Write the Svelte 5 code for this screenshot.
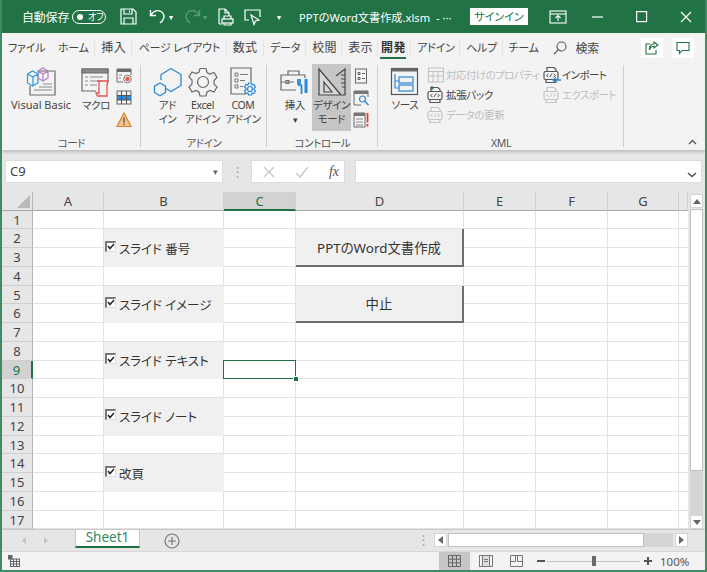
<script lang="ts">
  const TABS = ['ファイル', 'ホーム', '挿入', 'ページ レイアウト', '数式', 'データ', '校閲', '表示', '開発', 'アドイン', 'ヘルプ', 'チーム'];
  const KANJI_TABS = ['挿入', '数式', '校閲', '表示'];
  const COLUMNS = ['A', 'B', 'C', 'D', 'E', 'F', 'G', ''];
  const ROWS = Array.from({ length: 17 }, (_, i) => i + 1);

  // sheet controls sit on the grid: col is 1-based from A, row is the sheet row
  const CHECKS = [
    { row: 2, label: 'スライド 番号' },
    { row: 5, label: 'スライド イメージ' },
    { row: 8, label: 'スライド テキスト' },
    { row: 11, label: 'スライド ノート' },
    { row: 14, label: '改頁' },
  ];
  const BUTTONS = [
    { row: 2, label: 'PPTのWord文書作成' },
    { row: 5, label: '中止' },
  ];

  function covered(row: number, col: number) {
    if (col === 2) return CHECKS.some((c) => row === c.row || row === c.row + 1);
    if (col === 4) return BUTTONS.some((b) => row === b.row || row === b.row + 1);
    if (col === 3) return row === 9;
    return false;
  }
</script>

{#snippet xmlIcon(color: string, extra: string)}
  <svg width="18" height="18" viewBox="0 0 18 18" fill="none" stroke={color} stroke-width="1.2">
    <path d="M4 5V1.5h7l2 2V5" />
    <rect x="1" y="5.5" width="14" height="8" rx="1.5" />
    <path d="M5.5 8l-2 1.5 2 1.5M10.500 8l2 1.500-2 1.500M7 11l2-3.500" stroke-width="1" />
    <path d="M3 13.500v3h10v-3" />
    {#if extra === 'in'}<path d="M18 14h-8m3-2.500L10 14l3 2.500" stroke="#2b88d8" stroke-width="1.400" />{/if}
    {#if extra === 'plus'}<path d="M5 0v4M3 2h4" stroke="#217346" stroke-width="1.200" />{/if}
  </svg>
{/snippet}

<div class="window">
  <header class="titlebar">
    <span class="autosave">自動保存</span>
    <span class="toggle"><i></i>オフ</span>
    <svg class="qa save" width="17" height="17" viewBox="0 0 17 17" fill="none" stroke="#fff" stroke-width="1.200">
      <path d="M1 1h12l3 3v12H1z" /><path d="M4 1v5h8V1M4 16v-6h9v6M9.500 2.500v2" />
    </svg>
    <svg class="qa undo" width="18" height="17" viewBox="0 0 18 17" fill="none" stroke="#fff" stroke-width="1.400">
      <path d="M1.500 2v5.500H7M2 7c2-4 6.500-5.500 10-3.500 3.500 2 4 6 1.500 9L11 15" />
    </svg>
    <span class="drop">▾</span>
    <svg class="qa redo" width="18" height="17" viewBox="0 0 18 17" fill="none" stroke="#5f9a7c" stroke-width="1.400">
      <path d="M16.500 2v5.500H11M16 7c-2-4-6.500-5.500-10-3.500C2.500 5.500 2 9.500 4.500 12.500L7 15" />
    </svg>
    <span class="drop dim">▾</span>
    <svg class="qa print" width="17" height="18" viewBox="0 0 17 18" fill="none" stroke="#fff" stroke-width="1.200">
      <path d="M2 16V1h6l4 4v3M8 1v4h4" /><rect x="5" y="11" width="11" height="4" /><path d="M7 11V8h7v3M7 15v2h7v-2M2 16h3" />
    </svg>
    <svg class="qa show" width="17" height="18" viewBox="0 0 17 18" fill="none" stroke="#fff" stroke-width="1.200">
      <path d="M5 12H1V2h15v7" /><path d="M7 7l8 5-3.500 1-1.500 3.500z" />
    </svg>
    <span class="drop more">▾</span>
    <span class="doc">PPTのWord文書作成.xlsm&nbsp; - ···</span>
    <span class="signin">サインイン</span>
    <svg class="win-ico" width="19" height="14" viewBox="0 0 19 14" fill="none" stroke="#fff" stroke-width="1.100">
      <rect x="1" y="1" width="16" height="12" /><path d="M1 4h16" /><path d="M9 11V6M6.500 8L9 5.500 11.500 8" />
    </svg>
    <svg class="win-min" width="11" height="2"><path d="M0 1h11" stroke="#fff" stroke-width="1.200" /></svg>
    <svg class="win-max" width="12" height="12" fill="none" stroke="#fff" stroke-width="1.200"><rect x=".6" y=".6" width="10" height="10" /></svg>
    <svg class="win-close" width="12" height="12" stroke="#fff" stroke-width="1.200"><path d="M1 1l10 10M11 1L1 11" /></svg>
  </header>

  <nav class="tabs">
    {#each TABS as tab}
      <span class="tab" class:kanji={KANJI_TABS.includes(tab)} class:active={tab === '開発'}>{tab}</span>
    {/each}
    <svg class="search-ico" width="14" height="14" viewBox="0 0 14 14" fill="none" stroke="#555" stroke-width="1.100">
      <circle cx="8.500" cy="5.500" r="4.500" /><path d="M5.200 8.800L1 13" />
    </svg>
    <span class="search">検索</span>
    <span class="tab-btn share">
      <svg width="14" height="14" viewBox="0 0 14 14" fill="none" stroke="#217346" stroke-width="1.100">
        <path d="M5 3H1v10h10V9" /><path d="M9 1l4 3-4 3V5.200C6.500 5.200 5 6.500 4.500 9 4 5.500 6 3 9 3z" />
      </svg>
    </span>
    <span class="tab-btn">
      <svg width="14" height="14" viewBox="0 0 14 14" fill="none" stroke="#217346" stroke-width="1.100">
        <path d="M1 1.500h12v8H6l-2.500 3v-3H1z" />
      </svg>
    </span>
  </nav>

  <section class="ribbon">
    <div class="group code">
      <div class="group-body">
        <div class="big vb">
          <svg width="30" height="30" viewBox="0 0 30 30" fill="none">
            <path d="M13 4h16v24H4v-9" stroke="#6a6a6a" stroke-width="1.200" />
            <path d="M17 17h9M8 23h18M13 20h13" stroke="#8a8a8a" />
            <path d="M1.500 7l5-3 5.500 3v9l-5.500 3-5-3zM1.500 7l5.500 3 5-3M7 10v9" stroke="#2b9be0" stroke-width="1.200" />
            <path d="M12 4l5-3 5 3v7l-5 3-5-3zM12 4l5 3 5-3M17 7v7" stroke="#b27fc6" stroke-width="1.200" />
          </svg>
          <span>Visual Basic</span>
        </div>
        <div class="big macro">
          <svg width="30" height="30" viewBox="0 0 30 30" fill="none">
            <path d="M15 24H1V2h26v14" stroke="#6a6a6a" stroke-width="1.200" />
            <path d="M1 2h26v4H1z" fill="#8a8a8a" stroke="#6a6a6a" />
            <path d="M4 10h3M9 10h13M4 14h3M9 14h13M4 18h3M9 18h7" stroke="#8a8a8a" />
            <path d="M16 14h11l-1 3h1M18 14v12h-3l1.500 3H26V17" stroke="#e8544e" stroke-width="1.300" />
          </svg>
          <span>マクロ</span>
        </div>
        <div class="smalls">
          <svg width="16" height="16" viewBox="0 0 16 16" fill="none">
            <path d="M7 14H1V1h14v6" stroke="#6a6a6a" /><path d="M1 1h14v3H1z" fill="#6a6a6a" />
            <path d="M3 7h3M3 10h2" stroke="#888" /><circle cx="11.500" cy="11" r="3.800" stroke="#777" fill="#f3f3f3" /><circle cx="11.500" cy="11" r="2.200" fill="#e8544e" />
          </svg>
          <svg width="16" height="16" viewBox="0 0 16 16" fill="none">
            <rect x="1" y="1" width="14" height="13" stroke="#666" /><rect x="1" y="5.500" width="14" height="4.500" fill="#2b88d8" />
            <path d="M5.500 1v13M10.500 1v13M1 5.500h14M1 10h14" stroke="#555" />
          </svg>
          <svg width="16" height="16" viewBox="0 0 16 16">
            <path d="M8 1l7 13.500H1z" fill="#f2c38a" stroke="#d9822b" stroke-width="1.200" /><path d="M8 5.500v5M8 11.500v1.500" stroke="#555" stroke-width="1.400" />
          </svg>
        </div>
      </div>
      <span class="group-label">コード</span>
    </div>

    <div class="group addin">
      <div class="group-body">
        <div class="big w35">
          <svg width="30" height="30" viewBox="0 0 30 30" fill="none" stroke="#2b88d8" stroke-width="1.300">
            <path d="M18 1.500l10 6v11l-10 6-5-3M8 13V7.500l10-6" />
            <path d="M7 16l5.500 3.200v6.300L7 28.700 1.500 25.500v-6.300z" />
          </svg>
          <span>アド<br />イン</span>
        </div>
        <div class="big w35">
          <svg width="30" height="30" viewBox="0 0 30 30" fill="none" stroke="#6a6a6a" stroke-width="1.200">
            <path d="M12 1.500h6l1 4 3 1.500 4-1.500 3 5-3 3v3.500l3 3-3 5-4-1.500-3 1.500-1 4h-6l-1-4-3-1.500-4 1.500-3-5 3-3V13l-3-3 3-5 4 1.500 3-1.500z" />
            <circle cx="15" cy="15" r="5.500" />
          </svg>
          <span>Excel<br />アドイン</span>
        </div>
        <div class="big w38">
          <svg width="30" height="30" viewBox="0 0 30 30" fill="none">
            <path d="M18 27H3V1h20v14" stroke="#6a6a6a" stroke-width="1.200" />
            <path d="M7 6h3v3H7zM7 12h3v3H7zM7 18h3v3H7zM12 7.500h8M12 13.500h5M12 19.500h3" stroke="#777" />
            <circle cx="22" cy="22" r="2.500" stroke="#2b88d8" stroke-width="1.200" />
            <path d="M20.500 16h3l.5 2 2-.5 1.500 2.500-1.500 1.500v1l1.500 1.500-1.500 2.500-2-.5-.5 2h-3l-.5-2-2 .5-1.500-2.500 1.500-1.500v-1L16.500 20l1.500-2.500 2 .5z" stroke="#2b88d8" stroke-width="1.200" />
          </svg>
          <span>COM<br />アドイン</span>
        </div>
      </div>
      <span class="group-label">アドイン</span>
    </div>

    <div class="group control">
      <div class="group-body">
        <div class="big insert">
          <svg width="30" height="30" viewBox="0 0 30 30" fill="none">
            <path d="M8 8V4h11v4M16 23H1V8h24v3M1 15h13" stroke="#6a6a6a" stroke-width="1.200" />
            <rect x="6" y="13.500" width="3" height="3" stroke="#6a6a6a" />
            <path d="M20 12v4.500a2.500 2.500 0 0 0 1.500 2V27M18 12v5l1.500 2" stroke="#2b88d8" stroke-width="1.800" />
            <path d="M26 12v14" stroke="#2b88d8" stroke-width="3" />
          </svg>
          <span>挿入<br /><em>▾</em></span>
        </div>
        <div class="big design">
          <svg width="30" height="30" viewBox="0 0 30 30" fill="none" stroke="#444" stroke-width="1.200">
            <path d="M2 2l22 26H2z" fill="#d8d8d8" /><path d="M7 15l8 10H7z" />
            <path d="M19 9l9-7v26h-3" /><path d="M24 8h4M24 12h4M24 16h4M25 20h3" />
          </svg>
          <span>デザイン<br />モード</span>
        </div>
        <div class="smalls">
          <svg width="16" height="16" viewBox="0 0 16 16" fill="none" stroke="#666">
            <rect x="2.500" y="1" width="11" height="14" /><path d="M5 4.500h2v2H5zM5 9.500h2v2H5zM9 5.500h3M9 10.500h3" />
          </svg>
          <svg width="16" height="16" viewBox="0 0 16 16" fill="none">
            <path d="M8 15H1V1h14v6" stroke="#6a6a6a" /><path d="M1 1h14v3H1z" fill="#777" />
            <circle cx="9.500" cy="9" r="3" stroke="#2b88d8" stroke-width="1.200" /><path d="M12 11.500l3.500 3.500" stroke="#2b88d8" stroke-width="1.500" />
          </svg>
          <svg width="16" height="16" viewBox="0 0 16 16" fill="none">
            <path d="M1 1h11v14H1z" stroke="#6a6a6a" /><path d="M1 1h11v3H1z" fill="#777" /><path d="M3 7h7M3 10h7M3 13h7" stroke="#888" />
            <path d="M14.500 1v9.500M14.500 12v2.500" stroke="#e8383d" stroke-width="1.800" />
          </svg>
        </div>
      </div>
      <span class="group-label">コントロール</span>
    </div>

    <div class="group xml">
      <div class="group-body">
        <div class="big source">
          <svg width="30" height="30" viewBox="0 0 30 30" fill="none">
            <rect x="1.500" y="1.500" width="26" height="26" stroke="#555" stroke-width="1.200" /><path d="M1.500 1.500h26v3h-26z" fill="#6a6a6a" />
            <path d="M5 7v14h4M5 14h4" stroke="#2b88d8" stroke-width="1.200" /><rect x="9" y="10" width="14" height="6" stroke="#2b88d8" stroke-width="1.200" /><rect x="9" y="18" width="14" height="6" stroke="#2b88d8" stroke-width="1.200" />
          </svg>
          <span>ソース</span>
        </div>
        <div class="xml-col">
          <div class="xml-row off tight">
            <svg width="18" height="18" viewBox="0 0 18 18" fill="none" stroke="#c4c4c4" stroke-width="1.100">
              <rect x="1.500" y="2" width="15" height="14" /><path d="M1.500 5.500h15M6 5.500V16M11 5.500V16M1.500 10h15" />
            </svg>
            <span>対応付けのプロパティ</span>
          </div>
          <div class="xml-row">{@render xmlIcon('#555', 'plus')}<span>拡張パック</span></div>
          <div class="xml-row off">{@render xmlIcon('#c4c4c4', '')}<span>データの更新</span></div>
        </div>
        <div class="xml-col second">
          <div class="xml-row tight">{@render xmlIcon('#555', 'in')}<span>インポート</span></div>
          <div class="xml-row off tight">{@render xmlIcon('#c4c4c4', '')}<span>エクスポート</span></div>
        </div>
      </div>
      <span class="group-label">XML</span>
    </div>

    <svg class="collapse" width="9" height="6" fill="none" stroke="#555" stroke-width="1.300"><path d="M1 5l3.500-3.500L8 5" /></svg>
  </section>

  <div class="formula">
    <div class="namebox">C9<span class="caret">▾</span></div>
    <span class="grip">⋮</span>
    <div class="fx-btns">
      <svg width="12" height="12" stroke="#c6c6c6" stroke-width="1.300"><path d="M1 1l10 10M11 1L1 11" /></svg>
      <svg width="14" height="12" fill="none" stroke="#c6c6c6" stroke-width="1.300"><path d="M1 7l4 4 8-10" /></svg>
      <span class="fx">fx</span>
    </div>
    <div class="fx-input"><span class="caret">
      <svg width="10" height="6" fill="none" stroke="#555" stroke-width="1.600"><path d="M1 1l4 3.500L9 1" /></svg>
    </span></div>
  </div>

  <div class="sheet-area">
    <div class="grid">
      <div class="corner"><i></i></div>
      {#each COLUMNS as col}
        <div class="col-head" class:sel={col === 'C'}>{col}</div>
      {/each}

      {#each CHECKS as c}
        <label class="check" style="grid-row: {c.row + 1} / span 2">
          <span class="box">
            <svg width="8" height="7" fill="none" stroke="#222" stroke-width="1.500"><path d="M1 3l2 2.500L7 1" /></svg>
          </span>
          {c.label}
        </label>
      {/each}
      {#each BUTTONS as b}
        <div class="sheet-btn" style="grid-row: {b.row + 1} / span 2">{b.label}</div>
      {/each}
      <div class="selected"><i></i></div>

      {#each ROWS as r}
        <div class="row-head" class:sel={r === 9}>{r}</div>
        {#each COLUMNS as _, c}
          {#if !covered(r, c + 1)}
            <div class="cell" class:last={c === 7}></div>
          {/if}
        {/each}
      {/each}
    </div>

    <div class="vscroll">
      <div class="sb-btn"><svg width="8" height="5"><path d="M0 5l4-5 4 5z" fill="#666" /></svg></div>
      <div class="v-thumb"></div>
      <div class="v-track"></div>
      <div class="sb-btn"><svg width="8" height="5"><path d="M0 0l4 5 4-5z" fill="#666" /></svg></div>
    </div>
  </div>

  <div class="sheetbar">
    <svg class="nav-arrows" width="26" height="7"><path d="M4 0v7L0 3.500z" fill="#c4c4c4" /><path d="M22 0v7l4-3.500z" fill="#c4c4c4" /></svg>
    <div class="sheet-tab">Sheet1</div>
    <svg class="add" width="16" height="16" fill="none" stroke="#777" stroke-width="1.200"><circle cx="8" cy="8" r="7" /><path d="M8 4v8M4 8h8" /></svg>
    <span class="bar-grip">⋮</span>
    <div class="hscroll">
      <div class="h-btn"><svg width="5" height="8"><path d="M5 0v8L0 4z" fill="#666" /></svg></div>
      <div class="h-thumb"></div>
      <div class="h-track"></div>
      <div class="h-btn"><svg width="5" height="8"><path d="M0 0v8l5-4z" fill="#666" /></svg></div>
    </div>
  </div>

  <footer class="status">
    <svg class="macro-ico" width="12" height="12" viewBox="0 0 12 12" fill="none" stroke="#666">
      <rect x="2.500" y="4" width="9" height="7.500" /><path d="M2.500 6.500h9M5.500 4v7.500M8.500 4v7.500M2.500 9h9" /><rect x="0" y="0" width="4" height="4" fill="#666" />
    </svg>
    <div class="view active">
      <svg width="13" height="12" fill="none" stroke="#666"><path d="M.5.500h12v11H.5zM4.500.500v11M8.500.500v11M.5 4.200h12M.5 7.800h12" /></svg>
    </div>
    <div class="view">
      <svg width="14" height="12" fill="none" stroke="#777"><rect x=".5" y=".5" width="13" height="11" /><rect x="3.500" y=".5" width="7" height="11" fill="#ddd" /><path d="M5 4.500h4M5 6.500h4" /></svg>
    </div>
    <div class="view">
      <svg width="13" height="12" fill="none" stroke="#777"><path d="M.5.500h12v11H.5zM.5 6.500h5v-6M7.500.5v6h5" /></svg>
    </div>
    <span class="zoom-sign minus"></span>
    <div class="slider"><i></i></div>
    <span class="zoom-sign plus"></span>
    <span class="percent">100%</span>
  </footer>
</div>

<style>
  :global(body) { margin: 0; }
  .window {
    width: 707px; height: 572px; box-sizing: border-box; overflow: hidden;
    display: flex; flex-direction: column; background: #e6e6e6; position: relative;
    border-left: 2px solid #3f8a63; border-right: 2px solid #3f8a63; border-bottom: 2px solid #3f8a63;
    font-family: "Noto Sans", "Noto Sans CJK JP", sans-serif; font-feature-settings: "palt"; color: #444;
  }

  .titlebar { height: 33px; margin: 0 -2px; background: #217346; color: #fff; display: flex; align-items: center; flex: none; font-size: 12px; }
  .autosave { margin-left: 22px; width: 50px; flex: none; letter-spacing: -.2px; }
  .toggle { width: 34px; height: 14px; border: 1px solid #fff; border-radius: 8px; font-size: 9px; box-sizing: border-box; display: flex; align-items: center; gap: 5px; padding-left: 4px; flex: none; }
  .toggle i { width: 6px; height: 6px; border-radius: 50%; background: #fff; }
  .qa { flex: none; }
  .save { margin-left: 14px; }
  .undo { margin-left: 12px; }
  .redo { margin-left: 5px; }
  .print { margin-left: 5px; }
  .show { margin-left: 10px; }
  .drop { font-size: 8px; width: 9px; margin-left: 2px; flex: none; }
  .drop.dim { color: #5f9a7c; }
  .drop.more { margin-left: 16px; }
  .doc { margin-left: 13px; width: 171px; white-space: nowrap; font-size: 11.200px; flex: none; }
  .signin { background: #fff; color: #217346; width: 58px; height: 17px; line-height: 17px; text-align: center; font-size: 11px; flex: none; }
  .win-ico { margin-left: 21px; flex: none; }
  .win-min { margin-left: 24px; flex: none; }
  .win-max { margin-left: 33px; flex: none; }
  .win-close { margin-left: 32px; flex: none; }

  .tabs { height: 30px; flex: none; background: #f3f3f3; display: flex; align-items: center; font-size: 11px; position: relative; box-sizing: border-box; letter-spacing: -.2px; }
  .tab { padding: 0 6.300px; line-height: 30px; position: relative; white-space: nowrap; flex: none; }
  .tab:first-child { padding-left: 6px; }
  .tab:nth-child(n+7) { padding: 0 5.700px; }
  .tab::after { content: ''; position: absolute; right: 0; top: 6px; bottom: 6px; width: 1px; background: #e4e4e4; }
  .tab:first-child::after, .tab:nth-child(12)::after { display: none; }
  .tab.kanji { font-size: 12px; letter-spacing: .3px; }
  .tab.active { font-weight: 700; color: #333; font-size: 12px; letter-spacing: .3px; margin-left: -3px; }
  .tab.active::before { content: ''; position: absolute; left: 5px; right: 5px; bottom: 4px; height: 2px; background: #217346; }
  .search-ico { margin-left: 9px; flex: none; }
  .search { margin-left: 8px; white-space: nowrap; font-size: 12px; flex: none; }
  .tab-btn { width: 22px; height: 20px; background: #fff; display: flex; align-items: center; justify-content: center; margin-left: 9px; flex: none; }
  .share { margin-left: auto; }
  .tab-btn:last-child { margin-right: 11px; }

  .ribbon { height: 87px; flex: none; background: #f3f3f3; display: flex; position: relative; box-shadow: 0 2px 3px rgba(0, 0, 0, .18); z-index: 1; font-size: 10.500px; line-height: 14px; letter-spacing: -.35px; }
  .group { display: flex; flex-direction: column; position: relative; box-sizing: border-box; padding-top: 1px; }
  .group::after { content: ''; position: absolute; right: 0; top: 2px; bottom: 3px; width: 1px; background: #cfcfcf; }
  .group-body { display: flex; height: 72px; }
  .group-label { text-align: center; font-size: 10.500px; line-height: 14px; color: #555; }
  .code { width: 139px; }
  .addin { width: 126px; }
  .control { width: 111px; }
  .xml { width: 246px; }

  .big { display: flex; flex-direction: column; align-items: center; text-align: center; padding-top: 3px; flex: none; box-sizing: border-box; white-space: nowrap; }
  .big svg { margin-bottom: 1px; }
  .big em { font-style: normal; font-size: 9px; }
  .vb { width: 66px; margin-left: 6px; font-size: 11px; letter-spacing: 0; }
  .macro { width: 36px; margin-left: 4px; }
  .smalls { display: flex; flex-direction: column; gap: 6px; padding-top: 4px; margin-left: 2px; }
  .addin .group-body { padding-left: 9px; }
  .w35 { width: 35px; }
  .w38 { width: 40px; margin-left: 3px; }
  .control .group-body { padding-left: 12px; }
  .insert { width: 32px; }
  .design { width: 39px; height: 67px; background: #c6c6c6; margin-left: 1px; margin-right: 1px; }
  .control .smalls { margin-left: 1px; }
  .xml .group-body { padding-left: 10px; }
  .source { width: 34px; }
  .xml-col { display: flex; flex-direction: column; gap: 1.500px; padding-top: 2px; margin-left: 5px; width: 113px; }
  .xml-col.second { margin-left: 3px; width: 80px; }
  .xml-row { display: flex; align-items: center; height: 18.500px; gap: 1px; white-space: nowrap; }
  .xml-row.tight { letter-spacing: -.55px; }
  .xml-row.off { color: #bdbdbd; }
  .collapse { position: absolute; right: 8px; bottom: 5px; }

  .formula { height: 42px; flex: none; display: flex; align-items: flex-start; padding: 10px 0 0 3px; box-sizing: border-box; }
  .namebox { width: 218px; height: 23px; background: #fff; border: 1px solid #dcdcdc; box-sizing: border-box; line-height: 21px; font-size: 13px; padding-left: 4px; position: relative; flex: none; }
  .caret { position: absolute; right: 4px; top: 0; font-size: 9px; color: #666; }
  .grip { width: 28px; text-align: center; line-height: 23px; color: #aaa; font-size: 13px; flex: none; }
  .fx-btns { width: 94px; height: 23px; background: #fff; border: 1px solid #dcdcdc; box-sizing: border-box; display: flex; align-items: center; justify-content: space-between; padding: 0 5px 0 11px; flex: none; }
  .fx { font-family: "Liberation Serif", serif; font-style: italic; font-size: 14px; color: #555; }
  .fx-input { flex: 1; height: 23px; margin-left: 10px; background: #fff; border: 1px solid #dcdcdc; box-sizing: border-box; position: relative; margin-right: 3px; }
  .fx-input .caret { top: 7px; }

  .sheet-area { height: 337px; flex: none; display: flex; background: #fff; }
  .grid {
    width: 686px; flex: none; display: grid; background: #fff;
    grid-template-columns: 31px 71px 120px 72px 168px 72px 72px 71px 9px;
    grid-template-rows: 18.500px repeat(17, 18.750px);
  }
  .corner { background: #e6e6e6; border-right: 1px solid #b5b5b5; border-bottom: 1px solid #a8a8a8; box-sizing: border-box; position: relative; }
  .corner i { position: absolute; right: 2px; bottom: 2px; width: 0; height: 0; border-left: 13px solid transparent; border-bottom: 13px solid #b8b8b8; }
  .col-head { background: #e6e6e6; border-right: 1px solid #cfcfcf; border-bottom: 1px solid #a8a8a8; box-sizing: border-box; text-align: center; font-size: 13px; line-height: 18px; color: #444; }
  .col-head.sel { background: #d2d2d2; color: #217346; border-bottom: 2px solid #217346; }
  .row-head { background: #e6e6e6; border-right: 1px solid #b5b5b5; border-bottom: 1px solid #cfcfcf; box-sizing: border-box; text-align: center; font-size: 13px; line-height: 18px; color: #444; }
  .row-head.sel { background: #d2d2d2; color: #217346; border-right: 2px solid #217346; }
  .cell { border-right: 1px solid #e2e2e2; border-bottom: 1px solid #e2e2e2; box-sizing: border-box; background: #fff; }
  .cell.last { border-right: none; }

  .check { grid-column: 3; background: #f0f0f0; display: flex; align-items: center; gap: 3px; font-size: 12.500px; color: #333; padding-left: 1px; }
  .box { width: 11px; height: 11px; flex: none; box-sizing: border-box; background: #fff; border-left: 2px solid #777; border-top: 2px solid #777; border-right: 1px solid #ddd; border-bottom: 1px solid #ddd; margin-top: -4px; display: flex; align-items: center; justify-content: center; }
  .sheet-btn { grid-column: 5; background: #f0f0f0; display: flex; align-items: center; justify-content: center; font-size: 13.400px; color: #333; border-right: 2px solid #6e6e6e; border-bottom: 2px solid #6e6e6e; box-sizing: border-box; }
  .selected { grid-column: 4; grid-row: 10; border: 1.500px solid #217346; box-sizing: border-box; position: relative; z-index: 1; margin: -1px 0 0 -1px; }
  .selected i { position: absolute; right: -3px; bottom: -3px; width: 4px; height: 4px; background: #217346; border: 1px solid #fff; box-sizing: content-box; margin: -1px; }

  .vscroll { flex: 1; display: flex; flex-direction: column; background: #e6e6e6; padding: 2px 2px 0 2px; box-sizing: border-box; }
  .sb-btn { height: 14px; flex: none; background: #fff; border: 1px solid #d4d4d4; box-sizing: border-box; display: flex; align-items: center; justify-content: center; }
  .v-thumb { height: 262px; background: #fff; border: 1px solid #c0c0c0; box-sizing: border-box; margin-top: 1px; flex: none; }
  .v-track { flex: 1; background: #d6d6d6; }

  .sheetbar { height: 22px; flex: none; background: #e6e6e6; display: flex; align-items: flex-start; border-top: 1px solid #c8c8c8; box-sizing: border-box; }
  .nav-arrows { margin: 7px 0 0 20px; flex: none; }
  .sheet-tab { width: 65px; height: 18px; margin-left: 27px; background: #fff; color: #2f8a62; font-size: 13.500px; line-height: 15px; text-align: center; border-left: 1px solid #c8c8c8; border-right: 1px solid #c8c8c8; border-bottom: 2px solid #217346; box-sizing: border-box; flex: none; }
  .add { margin: 3px 0 0 24px; flex: none; }
  .bar-grip { margin-left: 237px; color: #aaa; font-size: 13px; line-height: 18px; width: 17px; flex: none; }
  .hscroll { width: 254px; height: 14px; margin: 3px 0 0 0; display: flex; flex: none; }
  .h-btn { width: 13px; background: #fff; border: 1px solid #d4d4d4; box-sizing: border-box; display: flex; align-items: center; justify-content: center; flex: none; }
  .h-thumb { width: 196px; background: #fff; border: 1px solid #c0c0c0; box-sizing: border-box; margin-left: 1px; flex: none; }
  .h-track { flex: 1; background: #d6d6d6; margin-right: 2px; }

  .status { height: 19px; flex: none; background: #f3f3f3; display: flex; align-items: center; border-top: 1px solid #d8d8d8; box-sizing: border-box; }
  .macro-ico { margin-left: 6px; margin-right: auto; flex: none; }
  .view { width: 31px; height: 100%; display: flex; align-items: center; justify-content: center; flex: none; }
  .view.active { background: #c6c6c6; }
  .zoom-sign { width: 8px; height: 8px; margin-left: 5px; position: relative; flex: none; }
  .zoom-sign::before { content: ''; position: absolute; left: 0; right: 0; top: 3px; height: 1.500px; background: #555; }
  .plus::after { content: ''; position: absolute; top: 0; bottom: 0; left: 3px; width: 1.500px; background: #555; }
  .slider { width: 93px; height: 1px; background: #c4c4c4; margin-left: 2px; position: relative; flex: none; }
  .slider i { position: absolute; left: 45px; top: -5px; width: 4px; height: 10px; background: #6a6a6a; }
  .plus { margin-left: 4px; }
  .percent { font-size: 11.500px; margin-left: 8px; margin-right: 13px; width: 32px; color: #555; white-space: nowrap; flex: none; }
</style>
